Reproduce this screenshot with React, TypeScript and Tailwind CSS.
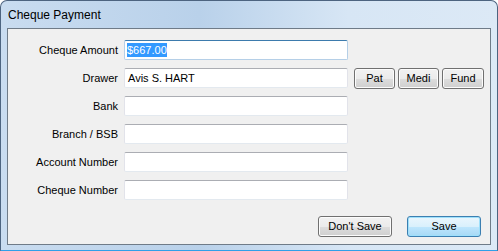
import React from 'react';

const fields = [
  { label: 'Cheque Amount', value: '$667.00', selected: true },
  { label: 'Drawer', value: 'Avis S. HART' },
  { label: 'Bank', value: '' },
  { label: 'Branch / BSB', value: '' },
  { label: 'Account Number', value: '' },
  { label: 'Cheque Number', value: '' },
];

function TextBox({ value, selected }: { value: string; selected?: boolean }) {
  return (
    <div
      className={
        selected
          ? 'w-[224px] h-[20px] flex items-center pl-[2px] bg-white rounded-[2px] border border-[#b5cfe7] border-t-[#3d7bad]'
          : 'w-[224px] h-[20px] flex items-center pl-[3px] bg-white rounded-[2px] border border-[#e2e3ea] border-t-[#abadb3] border-b-[#e3e9ef]'
      }
    >
      {selected ? <span className="bg-[#3399ff] text-white leading-[14px]">{value}</span> : <span>{value}</span>}
    </div>
  );
}

function Btn({ children, width, primary }: { children: React.ReactNode; width: string; primary?: boolean }) {
  return (
    <button
      type="button"
      className={
        (primary
          ? 'border-[#3c7fb1] bg-[linear-gradient(#eaf6fd_0%,#d9f0fc_50%,#bee6fd_51%,#a7d9f5_100%)] shadow-[inset_0_0_0_1px_#9ee0fb] '
          : 'border-[#707070] bg-[linear-gradient(#f2f2f2_0%,#ebebeb_50%,#dddddd_51%,#cfcfcf_100%)] shadow-[inset_0_0_0_1px_#fcfcfc] ') +
        width +
        ' h-[21px] shrink-0 border rounded-[3px] flex items-center justify-center text-black'
      }
    >
      {children}
    </button>
  );
}

export default function App() {
  return (
    <div
      className="w-[498px] h-[251px] rounded-t-[7px] border border-[#4d6480] border-b-[#2fa0e8] bg-[linear-gradient(90deg,#c9dcf0_0%,#b9d1ea_40%,#d7e6f5_70%,#dce9f6_100%)] flex flex-col text-[11px] text-black"
      style={{ fontFamily: '"Liberation Sans", Arial, sans-serif' }}
    >
      {/* Title bar */}
      <div className="h-[27px] pl-[7px] flex items-center text-[12px] text-black">Cheque Payment</div>

      {/* Client area */}
      <div className="mx-[6px] h-[217px] border border-[#6f7b88] bg-[#f0f0f0] flex flex-col pt-[11px]">
        <div className="flex flex-col gap-[8px]">
          {fields.map((f, i) => (
            <div key={f.label} className="flex items-center h-[20px]">
              <div className="w-[110px] shrink-0 text-right">{f.label}</div>
              <div className="ml-[6px] shrink-0">
                <TextBox value={f.value} selected={f.selected} />
              </div>
              {i === 1 && (
                <div className="flex gap-[3px] ml-[6px]">
                  <Btn width="w-[41px]">Pat</Btn>
                  <Btn width="w-[41px]">Medi</Btn>
                  <Btn width="w-[42px]">Fund</Btn>
                </div>
              )}
            </div>
          ))}
        </div>

        <div className="flex justify-end gap-[15px] mt-[16px] pr-[9px]">
          <Btn width="w-[74px]">Don't Save</Btn>
          <Btn width="w-[74px]" primary>
            Save
          </Btn>
        </div>
      </div>
    </div>
  );
}
